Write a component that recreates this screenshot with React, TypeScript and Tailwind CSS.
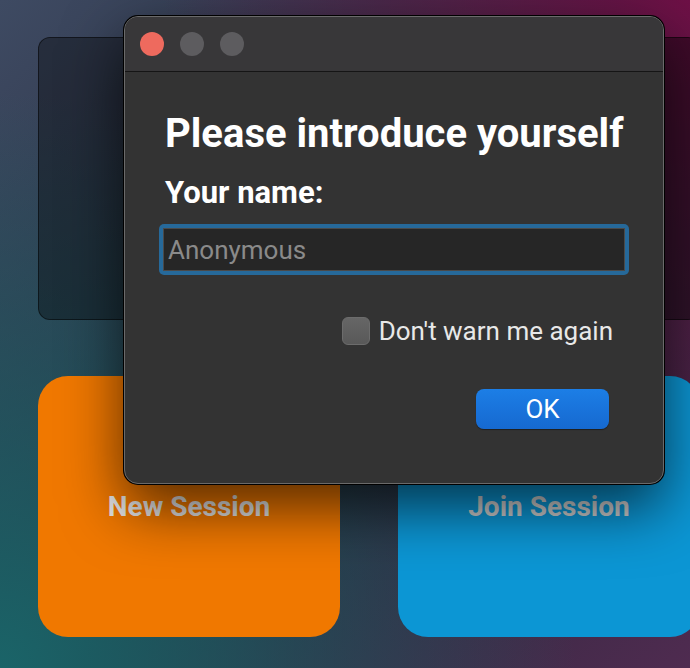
export default function App() {
  return (
    <div className="relative h-[668px] w-[690px] overflow-hidden font-[family-name:Roboto,'Liberation_Sans',sans-serif] bg-[radial-gradient(circle_at_100%_0%,#6e1046_0%,transparent_55%),radial-gradient(circle_at_0%_100%,#1a6468_0%,transparent_60%),linear-gradient(135deg,#3e4a62,#25293a_55%,#4f2b50)]">
      {/* menu cards behind the dialog */}
      <div className="grid w-[760px] grid-cols-[302px_302px] gap-x-[58px] gap-y-[56px] pl-[38px] pt-[37px]">
        <div className="h-[283px] rounded-[12px] border border-black/50 bg-black/35" />
        <div className="h-[283px] rounded-[12px] border border-black/50 bg-black/40" />
        <div className="flex h-[261px] items-center justify-center rounded-[30px] bg-[#f07800]">
          <span className="text-[28px] font-bold text-[#e6e6e6]">New Session</span>
        </div>
        <div className="flex h-[261px] items-center justify-center rounded-[30px] bg-[#0c96d4]">
          <span className="text-[28px] font-bold text-[#cfcfcf]">Join Session</span>
        </div>
      </div>

      {/* dialog */}
      <div className="absolute left-[124px] top-[16px] flex h-[468px] w-[540px] flex-col overflow-hidden rounded-[14px] border border-[#6a6a6a] bg-[#333333] shadow-[0_0_0_1px_#000,0_24px_60px_rgba(0,0,0,0.65)]">
        <div className="flex h-[55px] items-center gap-[16px] border-b border-[#151515] bg-[#383739] pl-[15px]">
          <span className="h-[24px] w-[24px] rounded-full bg-[#ee6a5e]" />
          <span className="h-[24px] w-[24px] rounded-full bg-[#5d5c5f]" />
          <span className="h-[24px] w-[24px] rounded-full bg-[#5d5c5f]" />
        </div>
        <div className="flex flex-col px-[34px]">
          <h1 className="mt-[38px] pl-[6px] text-[40px] font-bold leading-[47px] text-white">
            Please introduce yourself
          </h1>
          <label className="mt-[18px] pl-[6px] text-[31px] font-bold leading-[36px] text-white">
            Your name:
          </label>
          <div className="mt-[13px] h-[51px] rounded-[5px] bg-[#26699a] p-[4px]">
            <input
              placeholder="Anonymous"
              className="h-full w-full border border-[#4a4a4a] bg-[#262626] px-[4px] text-[26px] text-white outline-none placeholder:text-[#8a8a8a]"
            />
          </div>
          <div className="mt-[42px] flex items-center justify-end gap-[9px] pr-[16px]">
            <span className="h-[28px] w-[28px] rounded-[6px] border border-[#6c6c6c] bg-[linear-gradient(#666,#595959)]" />
            <span className="text-[26px] leading-[28px] text-[#e8e8e8]">Don't warn me again</span>
          </div>
          <div className="mt-[44px] flex justify-end pr-[20px]">
            <button className="h-[40px] w-[133px] rounded-[8px] bg-[linear-gradient(#1c7ee6,#1669d0)] text-[26px] text-white shadow-[0_1px_1px_rgba(0,0,0,0.4)]">
              OK
            </button>
          </div>
        </div>
      </div>
    </div>
  );
}
